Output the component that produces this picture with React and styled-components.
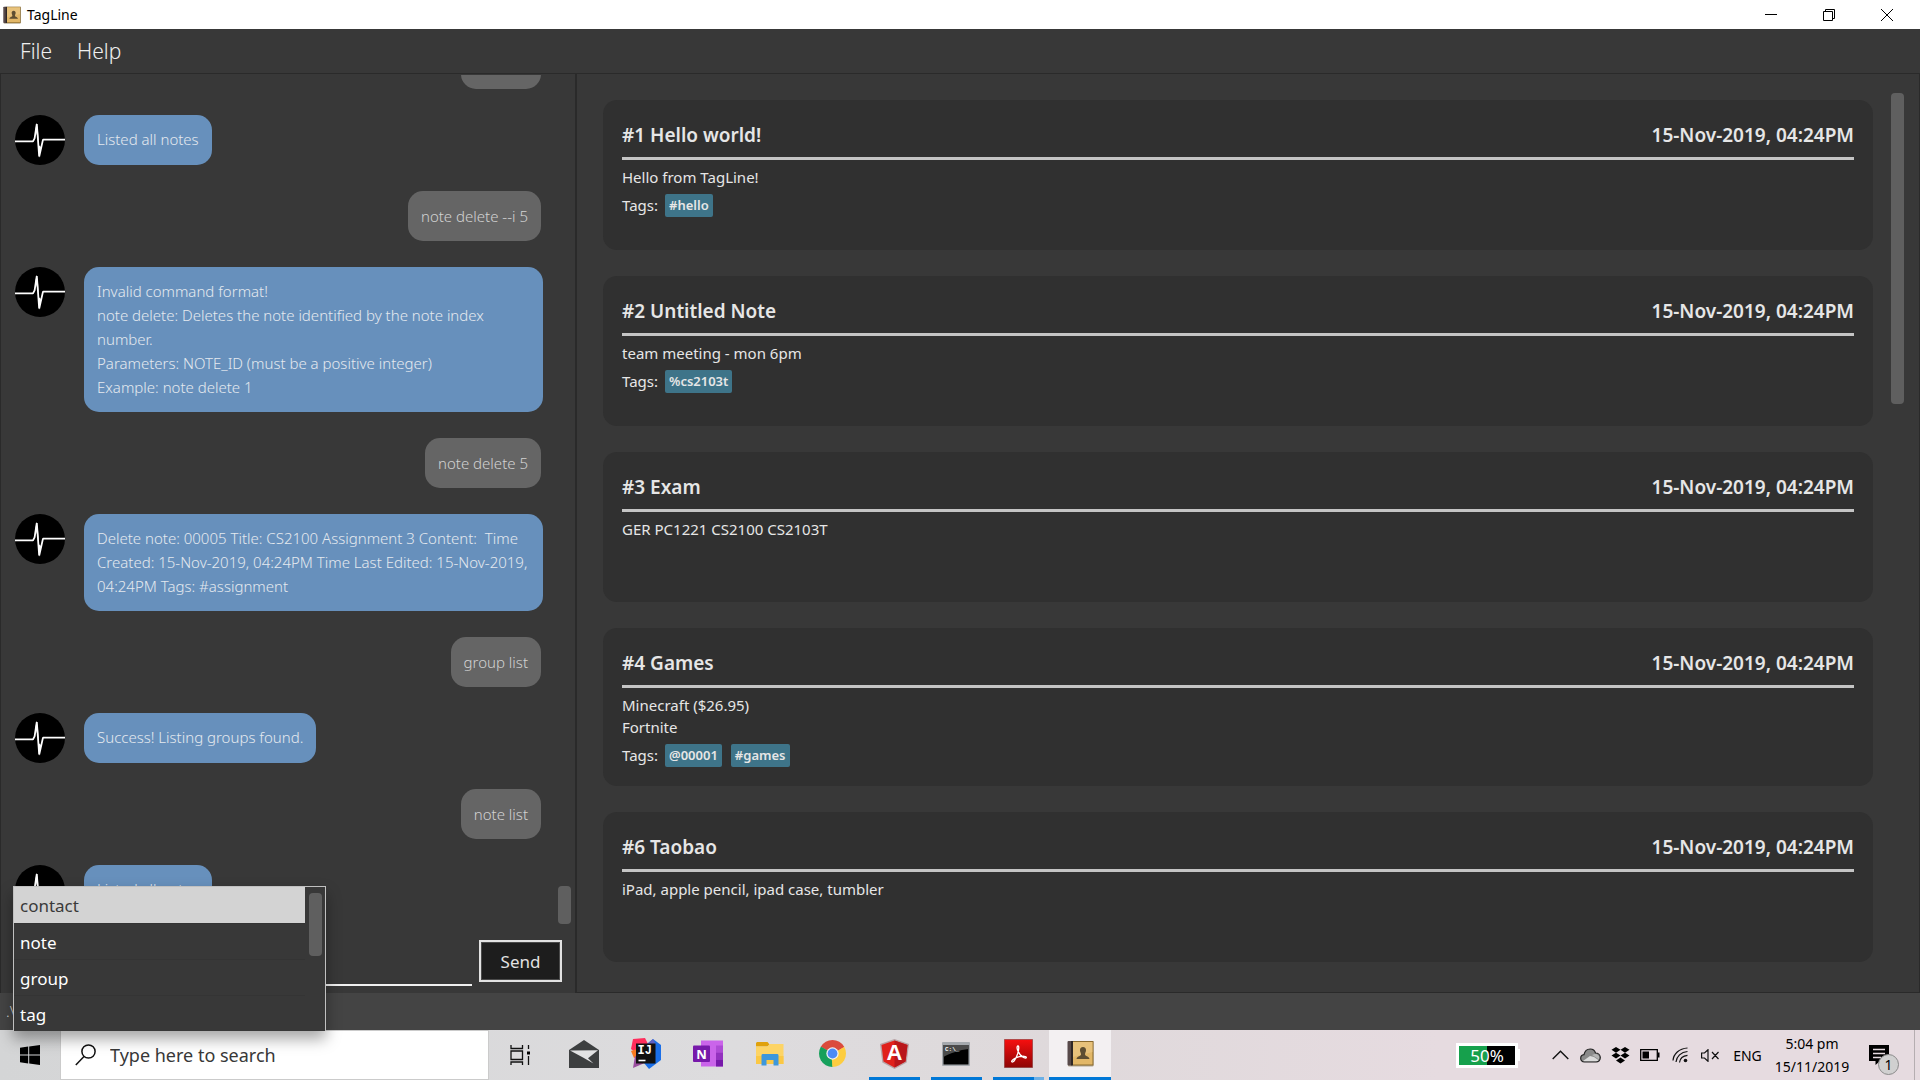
import React from 'react';
import styled, { createGlobalStyle, css } from 'styled-components';

const GlobalStyle = createGlobalStyle`
  *, *::before, *::after { box-sizing: border-box; }
  body {
    margin: 0;
    background: #383838;
    color: #e6e6e6;
    font-family: "Noto Sans", "Open Sans", sans-serif;
    overflow: hidden;
  }
  h2, p, ul { margin: 0; padding: 0; }
  ul { list-style: none; }
  button, input { font-family: inherit; }
  svg { display: block; flex: none; }
`;

const Desktop = styled.div`
  display: flex;
  flex-direction: column;
  height: 100vh;
`;

/* ---------- window chrome ---------- */

const TitleBar = styled.header`
  display: flex;
  align-items: center;
  height: 29px;
  padding: 0 4px 0 3px;
  gap: 6px;
  background: #fff;
  color: #000;
  font-size: 14px;
`;

const WindowTitle = styled.span`
  flex: 1;
`;

const WindowButtons = styled.div`
  display: flex;
`;

const WindowButton = styled.button`
  display: grid;
  place-items: center;
  width: 58px;
  height: 29px;
  padding: 0;
  border: 0;
  background: none;
`;

const MenuBar = styled.nav`
  display: flex;
  gap: 25px;
  align-items: center;
  height: 44px;
  padding: 0 20px;
  background: #383838;
`;

const MenuButton = styled.button`
  padding: 0;
  border: 0;
  background: none;
  color: #f0f0f0;
  font-size: 21px;
  font-weight: 300;
  line-height: 30px;
`;

const Workspace = styled.main`
  display: grid;
  grid-template-columns: calc(30% + 1px) 1fr;
  flex: 1;
  min-height: 0;
`;

const Thumb = styled.div`
  width: 13px;
  height: ${(p) => p.$length}px;
  border-radius: 4px;
  background: #5f5f5f;
`;

/* ---------- chat ---------- */

const ChatPane = styled.section`
  display: flex;
  flex-direction: column;
  min-height: 0;
  border: 1px solid #2a2a2a;
  border-width: 1px 2px 0 1px;
`;

const ChatScroller = styled.div`
  display: flex;
  flex: 1;
  min-height: 0;
  margin-top: 1px;
  overflow: hidden;
`;

const ChatLog = styled.div`
  display: flex;
  flex: 1;
  flex-direction: column;
  justify-content: flex-end;
  gap: 26px;
  padding: 0 15px 11px 14px;
`;

const ChatTrack = styled.div`
  display: flex;
  align-items: flex-end;
  width: 17px;
  padding-bottom: 2px;
`;

const Message = styled.div`
  display: flex;
  flex: none;
  align-items: flex-start;
  gap: 19px;
  ${(p) => p.$mine && css`
    justify-content: flex-end;
    padding-right: 2px;
  `}
`;

const Bubble = styled.p`
  min-height: 50px;
  padding: ${(p) => (p.$mine ? '13px' : '12px 13px 13px')};
  border-radius: 15px;
  background: ${(p) => (p.$mine ? '#656565' : '#6790bc')};
  color: ${(p) => (p.$mine ? '#d2d2d2' : '#e4e9ef')};
  font-size: 15px;
  font-weight: 300;
  line-height: 24px;
  white-space: pre-wrap;
`;

const Composer = styled.form`
  position: relative;
  display: flex;
  align-items: flex-start;
  gap: 7px;
  height: 67px;
  padding: 14px 13px 0 12px;
`;

const CommandInput = styled.input`
  flex: 1;
  min-width: 0;
  height: 46px;
  padding: 0 6px;
  border: 0;
  border-bottom: 2px solid #f0f0f0;
  outline: 0;
  background: transparent;
  color: #fff;
  font-size: 17px;
`;

const SendButton = styled.button`
  width: 83px;
  height: 42px;
  border: 2px solid #e2e2e2;
  background: #1d1d1d;
  box-shadow: inset 0 0 0 1px #4a4a4a;
  color: #e2e2e2;
  font-size: 17px;
`;

const Suggestions = styled.div`
  position: absolute;
  left: 12px;
  bottom: -38px;
  z-index: 2;
  display: flex;
  width: 313px;
  height: 145px;
  border: 1px solid #c0c0c0;
  border-bottom: 0;
  background: #383838;
  box-shadow: 0 8px 14px rgba(0, 0, 0, 0.35);
`;

const SuggestionList = styled.ul`
  flex: 1;
  overflow: hidden;
`;

const Suggestion = styled.li`
  height: ${(p) => (p.$selected ? 37 : 36)}px;
  padding: 0 6px;
  border-bottom: 1px solid #343434;
  color: #fff;
  font-size: 17px;
  line-height: 38px;
  ${(p) => p.$selected && css`
    background: #d3d3d3;
    color: #3a3a3a;
  `}
`;

const SuggestionTrack = styled.div`
  width: 20px;
  padding: 6px 0 0 4px;
`;

/* ---------- notes ---------- */

const NotesPane = styled.section`
  display: flex;
  min-height: 0;
  border: 1px solid #2a2a2a;
  border-left-width: 0;
  overflow: hidden;
`;

const NoteList = styled.div`
  display: flex;
  flex: 1;
  flex-direction: column;
  gap: 26px;
  padding: 26px 18px 0 26px;
`;

const NotesTrack = styled.div`
  width: 28px;
  padding-top: 19px;
`;

const NoteCard = styled.article`
  flex: none;
  min-height: 150px;
  padding: 0 19px;
  border-radius: 14px;
  background: #303030;
`;

const NoteHeader = styled.div`
  display: flex;
  align-items: center;
  justify-content: space-between;
  height: 60px;
  padding-top: 13px;
  border-bottom: 3px solid #c4c4c4;
  font-size: 19px;
  font-weight: 600;
`;

const NoteTitle = styled.h2`
  font-size: inherit;
  font-weight: inherit;
`;

const NoteBody = styled.p`
  padding-top: 6px;
  font-size: 15px;
  line-height: 22px;
  white-space: pre-line;
`;

const TagRow = styled.div`
  display: flex;
  align-items: center;
  gap: 9px;
  margin: 6px 0 19px;
  font-size: 15px;
  line-height: 23px;
`;

const TagLabel = styled.span`
  width: 34px;
`;

const Tag = styled.span`
  padding: 0 4px;
  border-radius: 2px;
  background: #3e7489;
  font-size: 13px;
  font-weight: 600;
`;

const StatusBar = styled.footer`
  height: 37px;
  padding: 0 6px;
  background: #444;
  color: #d8d8d8;
  font-size: 15px;
  font-weight: 300;
  line-height: 37px;
`;

/* ---------- taskbar ---------- */

const Taskbar = styled.footer`
  display: flex;
  height: 50px;
  background: linear-gradient(90deg, #d4d5d6 0%, #dddcde 38%, #dfd9db 55%, #e6dbe0 75%, #e6dbe0 100%);
  color: #000;
`;

const TaskButton = styled.button`
  display: grid;
  place-items: center;
  flex: none;
  width: ${(p) => p.$width || 62}px;
  height: 50px;
  padding: 0;
  border: 0;
  background: ${(p) => (p.$active ? '#f3f0f2' : 'none')};
`;

const AppButton = styled(TaskButton)`
  grid-template-rows: 47px 3px;
`;

const RunningMark = styled.span`
  width: ${(p) => (p.$active ? '62px' : '51px')};
  height: 3px;
  background: ${(p) => (p.$stacked ? 'linear-gradient(90deg, #0078d7 80%, #6cb0e6 80%)' : '#0078d7')};
`;

const SearchBox = styled.label`
  display: flex;
  align-items: center;
  gap: 14px;
  width: 429px;
  padding: 0 12px 0 14px;
  border: 1px solid #cbcbcb;
  background: #fff;
`;

const SearchInput = styled.input`
  flex: 1;
  min-width: 0;
  padding: 0;
  border: 0;
  outline: 0;
  background: transparent;
  font-size: 18px;
  &::placeholder { color: #383838; opacity: 1; }
`;

const Tray = styled.div`
  display: flex;
  align-items: center;
  margin-left: auto;
`;

const BatteryMeter = styled.div`
  display: flex;
  align-items: center;
  margin-right: 25px;
  color: #fff;
  font-size: 17px;
`;

const BatteryLevel = styled.span`
  width: 62px;
  height: 25px;
  border: 3px solid #fff;
  background: linear-gradient(90deg, #16a04c 50%, #000 50%);
  line-height: 19px;
  text-align: center;
`;

const BatteryNub = styled.span`
  width: 2px;
  height: 12px;
  background: #fff;
`;

const Language = styled.button`
  width: 45px;
  padding: 0;
  border: 0;
  background: none;
  font-size: 14px;
`;

const Clock = styled.time`
  width: 84px;
  font-size: 14px;
  line-height: 23px;
  text-align: center;
`;

const NotificationButton = styled(TaskButton)`
  position: relative;
  margin-right: 10px;
`;

const Badge = styled.span`
  position: absolute;
  left: 24px;
  top: 24px;
  width: 21px;
  height: 21px;
  border: 1px solid #8a8a8a;
  border-radius: 50%;
  background: #d0d0d0;
  font-size: 14px;
  line-height: 19px;
  text-align: center;
`;

const ShowDesktop = styled.button`
  width: 6px;
  height: 50px;
  padding: 0;
  border: 0;
  border-left: 1px solid #b5aeb1;
  background: none;
`;

/* ---------- icons ---------- */

const BookIcon = ({ size = 27 }) => (
  <svg width={size} height={size} viewBox="0 0 27 27" aria-hidden="true">
    <rect x="1" y="1.5" width="25.5" height="25" rx="1" fill="#8b7a55" opacity=".6" />
    <rect x="0.5" y="1" width="4.5" height="24.5" rx="1" fill="#57494a" />
    <rect x="4" y="1" width="2" height="24.5" fill="#2f2725" />
    <rect x="6" y="1" width="20.5" height="24.5" fill="#8a6a2e" />
    <rect x="6" y="2" width="19.5" height="22.5" fill="#e2b768" />
    <path d="M6 2h19.500v10L6 17z" fill="#edca88" opacity=".6" />
    <path d="M16 7c2 0 3.200 1.500 3 3.500-.2 1.800-1 2.500-1 4 0 1.700 4 1.700 4.500 4.500h-13c.5-2.800 4.500-2.800 4.500-4.500 0-1.500-.8-2.200-1-4-.2-2 1-3.500 3-3.500z" fill="#5e4e32" />
  </svg>
);

const MinimizeIcon = () => (
  <svg width="12" height="12" aria-hidden="true"><path d="M0 5.500h12" stroke="#000" /></svg>
);

const RestoreIcon = () => (
  <svg width="12" height="12" fill="none" stroke="#000" aria-hidden="true">
    <path d="M.5 2.500h9v9h-9zM2.500 2.500v-2h9v9h-2" />
  </svg>
);

const CloseIcon = () => (
  <svg width="12" height="12" stroke="#000" aria-hidden="true"><path d="M0 0l12 12M12 0L0 12" /></svg>
);

const PulseAvatar = () => (
  <svg width="50" height="50" viewBox="0 0 50 50" role="img" aria-label="TagLine bot">
    <circle cx="25" cy="25" r="25" fill="#000" />
    <path d="M0 26.400h18l1.600-3L21.800 9l2.400 32.500L28 24.600h22" fill="none" stroke="#fff" strokeWidth="1.800" strokeLinejoin="bevel" />
    <path d="M20.500 14l1-6 1.500 8 .8 12-1-4zM23.500 30l2.500 2-2 11z" fill="#fff" />
  </svg>
);

const WindowsIcon = () => (
  <svg width="20" height="20" viewBox="0 0 20 20" aria-hidden="true">
    <path d="M0 2.800L8.200 1.600v7.900H0zM9.200 1.500L20 0v9.500H9.200zM0 10.500h8.200v7.900L0 17.200zM9.200 10.500H20V20L9.200 18.500z" />
  </svg>
);

const SearchIcon = () => (
  <svg width="21" height="22" viewBox="0 0 21 22" fill="none" stroke="#111" strokeWidth="1.500" aria-hidden="true">
    <circle cx="13.500" cy="7.500" r="6.600" />
    <path d="M9 12.500L.8 21" />
  </svg>
);

const TaskViewIcon = () => (
  <svg width="22" height="20" viewBox="0 0 22 20" fill="none" stroke="#111" strokeWidth="1.300" aria-hidden="true">
    <path d="M1 0v3.500h11.500V0M1 6h11.500v8.500H1zM1 20v-3h11.500v3M18.500 0v4M18.500 11v9" />
    <path d="M17 6.500h3v3h-3z" fill="#000" stroke="none" />
  </svg>
);

const MailIcon = () => (
  <svg width="30" height="28" viewBox="0 0 30 28" aria-hidden="true">
    <path d="M0 10L15 0l15 10v18H0z" fill="#3d3f40" />
    <path d="M1 10.500l28-.2-10 8 5.500 5.200L14 17.500z" fill="#e2e2e3" />
  </svg>
);

const IntelliJIcon = () => (
  <svg width="30" height="31" viewBox="0 0 30 31" aria-hidden="true">
    <path d="M2 1l12-1 3 6-13 8-4-3z" fill="#fe2d5c" />
    <path d="M0 13l6-2v8l-3 1z" fill="#f97a1f" />
    <path d="M4 18l-2 12 14-6z" fill="#9a4f9f" />
    <path d="M16 6l6-5 8 6v15l-12 9-5-6z" fill="#1b6fe8" />
    <path d="M16 6l6-5 3 6z" fill="#5e61c4" />
    <rect x="5" y="5.500" width="19.500" height="20" fill="#111" />
    <text x="6.500" y="15.500" fontFamily="Liberation Mono, monospace" fontWeight="700" fontSize="12" fill="#fff">IJ</text>
    <path d="M7.500 22.500h7" stroke="#fff" strokeWidth="1.600" />
  </svg>
);

const OneNoteIcon = () => (
  <svg width="30" height="27" viewBox="0 0 30 27" aria-hidden="true">
    <rect x="8" y="0.500" width="22" height="26" fill="#ca64ea" />
    <rect x="23" y="5.500" width="7" height="7" fill="#ae4bd5" />
    <rect x="23" y="12.500" width="7" height="7" fill="#9332bf" />
    <rect x="23" y="19.500" width="7" height="7" fill="#7719aa" />
    <rect x="0" y="5.500" width="17" height="16.500" rx="1" fill="#7719aa" />
    <text x="8.500" y="18.500" textAnchor="middle" fontFamily="Open Sans, sans-serif" fontWeight="700" fontSize="13" fill="#fff">N</text>
  </svg>
);

const FolderIcon = () => (
  <svg width="28" height="24" viewBox="0 0 28 24" aria-hidden="true">
    <path d="M1 0h10.500l2 2.500-2 2H0V1z" fill="#e0a10c" />
    <path d="M0 4.500h11.500L14 2h13.500v20H0z" fill="#fdd465" />
    <path d="M0 14h27.500v8H0z" fill="#fbc845" />
    <path d="M5.500 23.500V13.500c0-1 .5-1.500 1.500-1.500h14c1 0 1.500.5 1.500 1.500v10h-5V18h-7v5.500z" fill="#3d97dc" />
  </svg>
);

const ChromeIcon = () => (
  <svg width="27" height="27" viewBox="0 0 28 28" aria-hidden="true">
    <path d="M14 14L1.880 7A14 14 0 0 1 26.120 7z" fill="#db4b3c" />
    <path d="M14 14l12.120-7A14 14 0 0 1 14 28z" fill="#fdcd40" />
    <path d="M14 14v14A14 14 0 0 1 1.880 7z" fill="#17a05c" />
    <path d="M14 7h12.120L14 14z" fill="#db4b3c" />
    <path d="M20.060 17.500L14 28l-1-11z" fill="#fdcd40" />
    <path d="M7.940 17.500L1.880 7 14 14z" fill="#17a05c" />
    <circle cx="14" cy="14" r="6.400" fill="#f2f2f2" />
    <circle cx="14" cy="14" r="5.100" fill="#4c8bf5" />
  </svg>
);

const AngularIcon = () => (
  <svg width="29" height="30" viewBox="0 0 29 30" aria-hidden="true">
    <path d="M14.500 0L29 5l-2.300 18.500L14.500 30 2.300 23.500 0 5z" fill="#b8a3a6" />
    <path d="M14.500 1.500L27.500 6l-2 16.500-11 6-11-6L1.500 6z" fill="#e0211c" />
    <path d="M14.500 1.500L27.500 6l-2 16.500-11 6z" fill="#b9171b" />
    <text x="14.500" y="21" textAnchor="middle" fontFamily="Liberation Sans, sans-serif" fontWeight="700" fontSize="22" fill="#fff">A</text>
  </svg>
);

const ConsoleIcon = () => (
  <svg width="28" height="24" viewBox="0 0 28 24" aria-hidden="true">
    <rect width="28" height="24" rx="1" fill="#a5a9ae" />
    <rect x="1.500" y="3" width="25" height="19.500" fill="#000" />
    <path d="M1.500 3h25v4C18 8 8 11 1.500 15z" fill="#4b4b4b" />
    <text x="3" y="9" fontFamily="Liberation Mono, monospace" fontWeight="700" fontSize="6" fill="#fff">C:\_</text>
  </svg>
);

const AcrobatIcon = () => (
  <svg width="29" height="29" viewBox="0 0 29 29" aria-hidden="true">
    <defs>
      <linearGradient id="acro" x1="0" y1="0" x2="0" y2="1">
        <stop offset="0" stopColor="#f70f0f" />
        <stop offset="1" stopColor="#8e0505" />
      </linearGradient>
    </defs>
    <rect x=".5" y=".5" width="28" height="28" fill="url(#acro)" stroke="#7a2020" strokeOpacity=".5" />
    <path d="M14 7c-1.800 0-.9 5 2 8.500 2.600 3.200 6 4.500 6.300 3 .3-1.700-6.300-1.600-10 .1-3 1.400-5.300 3.300-4.400 4.300 1.200 1.200 4.200-3.500 5.700-8C14.800 11 15.300 7 14 7z" fill="none" stroke="#fff" strokeWidth="1.300" />
  </svg>
);

const ChevronIcon = () => (
  <svg width="17" height="10" fill="none" stroke="#111" strokeWidth="1.400" aria-hidden="true"><path d="M.7 9L8.500 1.200 16.300 9" /></svg>
);

const CloudIcon = () => (
  <svg width="21" height="15" viewBox="0 0 21 15" aria-hidden="true">
    <path d="M4.500 14C2 14 .7 12.300.7 10.300c0-2 1.400-3.500 3.300-3.700C4.700 3.200 7 1 10.200 1c2.600 0 4.600 1.500 5.300 4 2.800 0 4.800 2 4.800 4.600 0 2.500-1.800 4.400-4.200 4.400z" fill="#8a8a8a" />
    <path d="M3 13l7-5 4 1 5 3.500-2 1H4z" fill="#dcdcdc" />
    <path d="M12 7l4-1.500 3.500 3-.3 3z" fill="#b5b5b5" />
    <path d="M4.500 14C2 14 .7 12.300.7 10.300c0-2 1.400-3.500 3.300-3.700C4.700 3.200 7 1 10.200 1c2.600 0 4.600 1.500 5.300 4 2.800 0 4.800 2 4.800 4.600 0 2.500-1.800 4.400-4.200 4.400z" fill="none" stroke="#222" strokeWidth="1.200" />
  </svg>
);

const DropboxIcon = () => (
  <svg width="19" height="17" viewBox="0 0 19 17" aria-hidden="true">
    <path d="M5 0l4.500 2.800L5 5.700.5 2.800zM14 0l4.500 2.800L14 5.700 9.500 2.800zM5 5.700l4.500 2.900L5 11.500.5 8.600zM14 5.700l4.500 2.900-4.500 2.900-4.500-2.900zM9.500 10.600l4.500 2.900L9.500 16.500 5 13.500z" />
  </svg>
);

const BatteryIcon = () => (
  <svg width="20" height="12" viewBox="0 0 20 12" aria-hidden="true">
    <path d="M.7.700h16.600v10.600H.7z" fill="none" stroke="#000" strokeWidth="1.300" />
    <path d="M2.500 2.500H9v7H2.500zM18 3.500h1.500v5H18z" />
  </svg>
);

const WifiIcon = () => (
  <svg width="16" height="16" viewBox="0 0 16 16" fill="none" stroke="#111" strokeWidth="1.200" aria-hidden="true">
    <path d="M1 13.500C1.500 7 7 1.500 15.500 1M4 15C4.500 9.500 9 5 15.500 4.500M7.500 15.500C8 11.500 11 8.700 15.500 8.300" />
    <circle cx="13.500" cy="13.500" r="1.800" fill="#111" stroke="none" />
  </svg>
);

const MuteIcon = () => (
  <svg width="19" height="13" viewBox="0 0 19 13" fill="none" stroke="#111" strokeWidth="1.200" aria-hidden="true">
    <path d="M.6 4h2.900l3.500-3.300v11.600L3.500 9H.6zM11 3l6.500 7M17.500 3L11 10" />
  </svg>
);

const NotificationIcon = () => (
  <svg width="20" height="20" viewBox="0 0 20 20" aria-hidden="true">
    <path d="M0 0h20v16h-9l-4.500 4v-4H0z" />
    <path d="M4 4.500h12M4 8.500h12M4 12.500h8" stroke="#e6dbe0" strokeWidth="1.300" />
  </svg>
);

/* ---------- data ---------- */

const messages = [
  { mine: true, text: 'note list' },
  { text: 'Listed all notes' },
  { mine: true, text: 'note delete --i 5' },
  {
    text: 'Invalid command format!\nnote delete: Deletes the note identified by the note index number.\nParameters: NOTE_ID (must be a positive integer)\nExample: note delete 1',
  },
  { mine: true, text: 'note delete 5' },
  {
    text: 'Delete note: 00005 Title: CS2100 Assignment 3 Content:  Time Created: 15-Nov-2019, 04:24PM Time Last Edited: 15-Nov-2019, 04:24PM Tags: #assignment',
  },
  { mine: true, text: 'group list' },
  { text: 'Success! Listing groups found.' },
  { mine: true, text: 'note list' },
  { text: 'Listed all notes' },
];

const timestamp = '15-Nov-2019, 04:24PM';

const notes = [
  { id: 1, title: 'Hello world!', body: 'Hello from TagLine!', tags: ['#hello'] },
  { id: 2, title: 'Untitled Note', body: 'team meeting - mon 6pm', tags: ['%cs2103t'] },
  { id: 3, title: 'Exam', body: 'GER PC1221 CS2100 CS2103T', tags: [] },
  { id: 4, title: 'Games', body: 'Minecraft ($26.95)\nFortnite', tags: ['@00001', '#games'] },
  { id: 6, title: 'Taobao', body: 'iPad, apple pencil, ipad case, tumbler', tags: [] },
];

const suggestions = ['contact', 'note', 'group', 'tag'];

const apps = [
  { name: 'Mail', Icon: MailIcon },
  { name: 'IntelliJ IDEA', Icon: IntelliJIcon },
  { name: 'OneNote', Icon: OneNoteIcon },
  { name: 'File Explorer', Icon: FolderIcon },
  { name: 'Chrome', Icon: ChromeIcon },
  { name: 'Angular', Icon: AngularIcon, running: true },
  { name: 'Command Prompt', Icon: ConsoleIcon, running: true },
  { name: 'Acrobat Reader', Icon: AcrobatIcon, running: true, stacked: true },
  { name: 'TagLine', Icon: BookIcon, running: true, active: true },
];

const trayIcons = [
  { name: 'Show hidden icons', Icon: ChevronIcon },
  { name: 'OneDrive', Icon: CloudIcon },
  { name: 'Dropbox', Icon: DropboxIcon },
  { name: 'Battery', Icon: BatteryIcon },
  { name: 'Network', Icon: WifiIcon },
  { name: 'Volume muted', Icon: MuteIcon },
];

/* ---------- sections ---------- */

const Chat = () => (
  <ChatPane>
    <ChatScroller>
      <ChatLog>
        {messages.map((m, i) => (
          <Message key={i} $mine={m.mine}>
            {!m.mine && <PulseAvatar />}
            <Bubble $mine={m.mine}>{m.text}</Bubble>
          </Message>
        ))}
      </ChatLog>
      <ChatTrack>
        <Thumb $length={38} />
      </ChatTrack>
    </ChatScroller>
    <Composer onSubmit={(e) => e.preventDefault()}>
      <CommandInput type="text" aria-label="Command" />
      <SendButton type="submit">Send</SendButton>
      <Suggestions>
        <SuggestionList>
          {suggestions.map((s, i) => (
            <Suggestion key={s} $selected={i === 0}>{s}</Suggestion>
          ))}
        </SuggestionList>
        <SuggestionTrack>
          <Thumb $length={63} />
        </SuggestionTrack>
      </Suggestions>
    </Composer>
  </ChatPane>
);

const Notes = () => (
  <NotesPane>
    <NoteList>
      {notes.map((n) => (
        <NoteCard key={n.id}>
          <NoteHeader>
            <NoteTitle>{`#${n.id} ${n.title}`}</NoteTitle>
            <time>{timestamp}</time>
          </NoteHeader>
          <NoteBody>{n.body}</NoteBody>
          {n.tags.length > 0 && (
            <TagRow>
              <TagLabel>Tags:</TagLabel>
              {n.tags.map((t) => <Tag key={t}>{t}</Tag>)}
            </TagRow>
          )}
        </NoteCard>
      ))}
    </NoteList>
    <NotesTrack>
      <Thumb $length={311} />
    </NotesTrack>
  </NotesPane>
);

export default function App() {
  return (
    <Desktop>
      <GlobalStyle />
      <TitleBar>
        <BookIcon size={18} />
        <WindowTitle>TagLine</WindowTitle>
        <WindowButtons>
          <WindowButton aria-label="Minimize"><MinimizeIcon /></WindowButton>
          <WindowButton aria-label="Restore"><RestoreIcon /></WindowButton>
          <WindowButton aria-label="Close"><CloseIcon /></WindowButton>
        </WindowButtons>
      </TitleBar>
      <MenuBar>
        <MenuButton>File</MenuButton>
        <MenuButton>Help</MenuButton>
      </MenuBar>
      <Workspace>
        <Chat />
        <Notes />
      </Workspace>
      <StatusBar>.\</StatusBar>
      <Taskbar>
        <TaskButton $width={60} aria-label="Start"><WindowsIcon /></TaskButton>
        <SearchBox>
          <SearchIcon />
          <SearchInput type="text" placeholder="Type here to search" aria-label="Search" />
        </SearchBox>
        <TaskButton $width={64} aria-label="Task View"><TaskViewIcon /></TaskButton>
        {apps.map(({ name, Icon, running, stacked, active }) => (
          <AppButton key={name} aria-label={name} $active={active}>
            <Icon />
            {running && <RunningMark $stacked={stacked} $active={active} />}
          </AppButton>
        ))}
        <Tray>
          <BatteryMeter>
            <BatteryLevel>50%</BatteryLevel>
            <BatteryNub />
          </BatteryMeter>
          {trayIcons.map(({ name, Icon }) => (
            <TaskButton key={name} $width={30} aria-label={name}><Icon /></TaskButton>
          ))}
          <Language>ENG</Language>
          <Clock>5:04 pm<br />15/11/2019</Clock>
          <NotificationButton $width={50} aria-label="Notifications">
            <NotificationIcon />
            <Badge>1</Badge>
          </NotificationButton>
          <ShowDesktop aria-label="Show desktop" />
        </Tray>
      </Taskbar>
    </Desktop>
  );
}
